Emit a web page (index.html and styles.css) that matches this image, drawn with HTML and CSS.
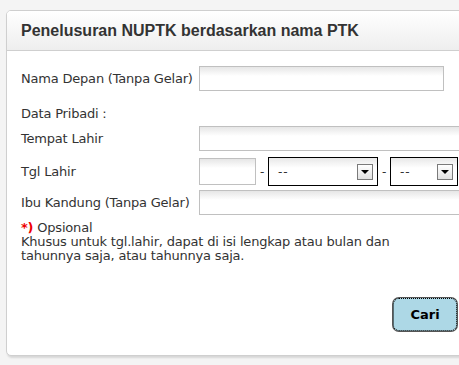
FILE: index.html
```html
<!DOCTYPE html>
<html>
<head>
<meta charset="utf-8">
<link rel="stylesheet" href="styles.css">
</head>
<body>
<div class="panel">
  <div class="panel-head">Penelusuran NUPTK berdasarkan nama PTK</div>
  <div class="panel-body">
    <div class="row r1">
      <label class="lbl">Nama Depan (Tanpa Gelar)</label>
      <input class="txt w245" type="text">
    </div>
    <div class="row r2">
      <span class="lbl">Data Pribadi :</span>
    </div>
    <div class="row r3">
      <label class="lbl">Tempat Lahir</label>
      <input class="txt wfull" type="text">
    </div>
    <div class="row r4">
      <label class="lbl">Tgl Lahir</label>
      <input class="txt wday" type="text">
      <span class="dash">-</span>
      <div class="sel s1"><span class="val">--</span><span class="arrow"></span></div>
      <span class="dash">-</span>
      <div class="sel s2"><span class="val">--</span><span class="arrow"></span></div>
    </div>
    <div class="row r5">
      <label class="lbl">Ibu Kandung (Tanpa Gelar)</label>
      <input class="txt wfull" type="text">
    </div>
    <div class="note">
      <div><span class="star">*)</span> Opsional</div>
      <div>Khusus untuk tgl.lahir, dapat di isi lengkap atau bulan dan</div>
      <div>tahunnya saja, atau tahunnya saja.</div>
    </div>
    <div class="actions">
      <button class="btn" type="button">Cari</button>
    </div>
  </div>
</div>
</body>
</html>
```

FILE: styles.css
```css
html, body {
  margin: 0;
  padding: 0;
}
body {
  background: #f4f4f4;
  width: 459px;
  height: 365px;
  overflow: hidden;
  font-family: "DejaVu Sans", Verdana, sans-serif;
  font-size: 13px;
  letter-spacing: -0.2px;
  color: #333;
}
.panel {
  margin: 10px 0 0 6px;
  width: 520px;
  height: 346px;
  background: #fff;
  border: 1px solid #cfcfcf;
  border-radius: 5px;
  box-shadow: 1px 2px 2px rgba(0,0,0,0.12);
  box-sizing: border-box;
  overflow: hidden;
}
.panel-head {
  height: 40px;
  box-sizing: border-box;
  border-bottom: 1px solid #cfcfcf;
  background: linear-gradient(#ffffff, #eeeeee);
  padding: 0 0 0 14px;
  line-height: 40px;
  font-family: "Liberation Sans", Arial, sans-serif;
  font-weight: bold;
  font-size: 16px;
  letter-spacing: 0;
  color: #333;
}
.panel-body {
  padding: 15px 0 0 14px;
}
.row {
  display: flex;
  align-items: center;
}
.lbl {
  width: 178px;
  flex: none;
}
.r2 { height: 17px; margin-top: 14px; }
.r3 { margin-top: 4px; }
.r4 { margin-top: 6px; }
.r5 { margin-top: 4px; }
.txt {
  box-sizing: border-box;
  height: 25px;
  margin: 0;
  border: 1px solid #c0c0c0;
  background: linear-gradient(#e6e6e6, #ffffff 9px, #ffffff);
  padding: 0 4px;
  font: inherit;
}
.w245 { width: 245px; }
.wfull { width: 300px; }
.wday { width: 57px; height: 27px; }
.dash {
  width: 12px;
  text-align: center;
  font-size: 12px;
}
.sel {
  box-sizing: border-box;
  height: 29px;
  border: 1px solid #000;
  background: linear-gradient(#e8e8e8, #ffffff 10px, #ffffff);
  display: flex;
  align-items: center;
  justify-content: space-between;
  padding: 0 4px 0 9px;
}
.s1 { width: 110px; }
.s2 { width: 68px; }
.val {
  font-size: 12px;
  letter-spacing: 1px;
}
.arrow {
  width: 16px;
  height: 16px;
  box-sizing: border-box;
  border: 1px solid #7a7a7a;
  background: linear-gradient(#ffffff, #e2e2e2);
  position: relative;
}
.arrow::after {
  content: "";
  position: absolute;
  left: 3px;
  top: 5px;
  border-left: 4px solid transparent;
  border-right: 4px solid transparent;
  border-top: 4px solid #000;
}
.note {
  margin-top: 6px;
  line-height: 14px;
}
.star {
  color: #e00;
  font-weight: bold;
}
.actions {
  display: flex;
  padding: 35px 0 0 372px;
}
.btn {
  width: 64px;
  height: 33px;
  box-sizing: border-box;
  background: #add8e6;
  border: 1px dotted #000;
  border-radius: 6px;
  box-shadow: 0 0 0 1px #555;
  font-family: "DejaVu Sans", Verdana, sans-serif;
  font-weight: bold;
  font-size: 13px;
  color: #000;
  padding: 0;
}
```
